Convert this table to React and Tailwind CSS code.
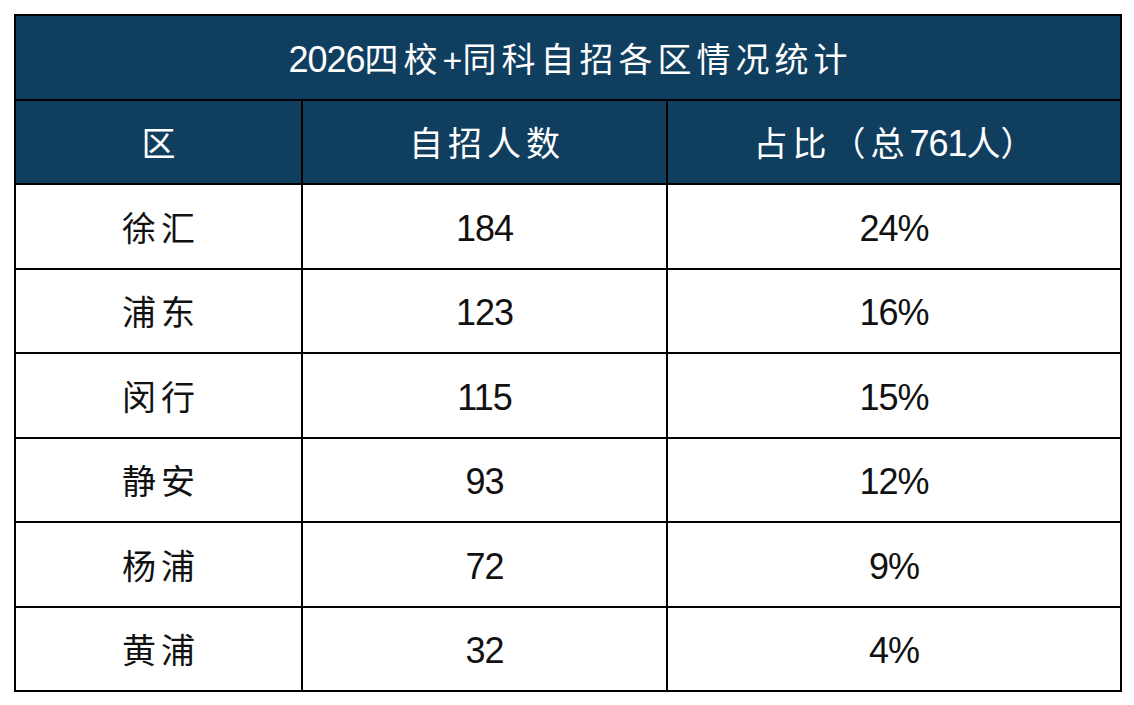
import React from 'react'

const rows = [
  ['徐汇', '184', '24%'],
  ['浦东', '123', '16%'],
  ['闵行', '115', '15%'],
  ['静安', '93', '12%'],
  ['杨浦', '72', '9%'],
  ['黄浦', '32', '4%'],
]

const font = { fontFamily: '"Liberation Sans", "Noto Sans CJK SC", sans-serif' }

// CJK glyphs in the source sit on a wider pitch than the font gives; digits run taller and tighter
const Cjk = ({ children }) => <span className="tracking-[5px]">{children}</span>
const Num = ({ children }) => <span className="text-[36px] tracking-[-1px]">{children}</span>

const cell = 'border-2 border-black text-center align-middle pt-[5px]'

export default function App() {
  return (
    <div className="w-[1134px] h-[705px] bg-white pt-[14px] pl-[14px]" style={font}>
      <table className="w-[1106px] table-fixed border-collapse border-2 border-black text-[34px] leading-none">
        <colgroup>
          <col className="w-[287px]" />
          <col className="w-[365px]" />
          <col className="w-[454px]" />
        </colgroup>
        <thead>
          <tr className="h-[84.5px] bg-[#103e5f] text-white">
            <th colSpan={3} className={`${cell} font-normal`}>
              <Num>2026</Num><Cjk>四校</Cjk>+<Cjk>同科自招各区情况统</Cjk>计
            </th>
          </tr>
          <tr className="h-[84.5px] bg-[#103e5f] text-white">
            <th className={`${cell} font-normal`}>区</th>
            <th className={`${cell} font-normal`}>
              <Cjk>自招人</Cjk>数
            </th>
            <th className={`${cell} font-normal`}>
              <Cjk>占比（总</Cjk><Num>761</Num>人）
            </th>
          </tr>
        </thead>
        <tbody className="text-[#111]">
          {rows.map(([area, count, pct]) => (
            <tr key={area} className="h-[84.5px]">
              <td className={cell}>
                <Cjk>{area[0]}</Cjk>{area[1]}
              </td>
              <td className={cell}><Num>{count}</Num></td>
              <td className={cell}><Num>{pct}</Num></td>
            </tr>
          ))}
        </tbody>
      </table>
    </div>
  )
}
